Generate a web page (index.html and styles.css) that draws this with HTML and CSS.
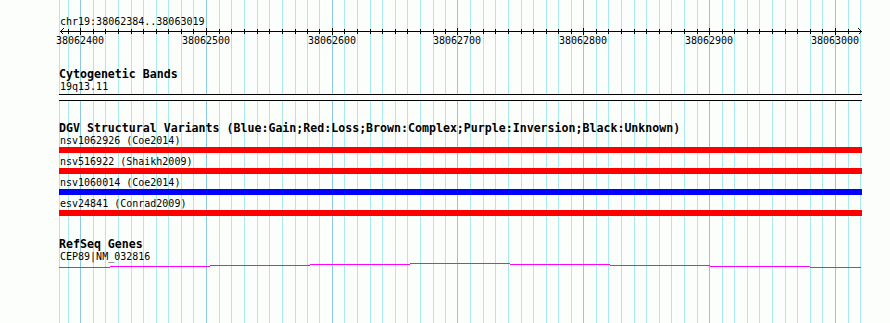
FILE: index.html
```html
<!DOCTYPE html>
<html lang="en">
<head>
<meta charset="utf-8">
<title>chr19:38062384..38063019</title>
<link rel="stylesheet" href="styles.css">
</head>
<body>
<div class="panel">
  <!-- grid: one line every 10 bp, darker every 100 bp -->
  <svg class="grid" width="890" height="323" viewBox="0 0 890 323">
    <path class="minor" d="M59.5 0V323M68.5 0V323M93.5 0V323M105.5 0V323M118.5 0V323M131.5 0V323M143.5 0V323M156.5 0V323M168.5 0V323M181.5 0V323M193.5 0V323M219.5 0V323M231.5 0V323M244.5 0V323M257.5 0V323M269.5 0V323M282.5 0V323M295.5 0V323M307.5 0V323M319.5 0V323M344.5 0V323M357.5 0V323M370.5 0V323M382.5 0V323M395.5 0V323M407.5 0V323M420.5 0V323M433.5 0V323M445.5 0V323M470.5 0V323M483.5 0V323M495.5 0V323M508.5 0V323M521.5 0V323M533.5 0V323M546.5 0V323M558.5 0V323M571.5 0V323M596.5 0V323M608.5 0V323M621.5 0V323M634.5 0V323M646.5 0V323M659.5 0V323M671.5 0V323M684.5 0V323M697.5 0V323M722.5 0V323M734.5 0V323M747.5 0V323M759.5 0V323M772.5 0V323M785.5 0V323M797.5 0V323M810.5 0V323M822.5 0V323M848.5 0V323M860.5 0V323"/>
    <path class="major" d="M80.5 0V323M206.5 0V323M332.5 0V323M457.5 0V323M583.5 0V323M709.5 0V323M835.5 0V323"/>
  </svg>

  <section class="track ruler">
    <p class="label">chr19:38062384..38063019</p>
    <svg class="scale" width="890" height="19" viewBox="0 0 890 19">
      <path d="M60 4.5H862"/>
      <path d="M68.5 2V7M93.5 2V7M105.5 2V7M118.5 2V7M131.5 2V7M143.5 2V7M156.5 2V7M168.5 2V7M181.5 2V7M193.5 2V7M219.5 2V7M231.5 2V7M244.5 2V7M257.5 2V7M269.5 2V7M282.5 2V7M295.5 2V7M307.5 2V7M319.5 2V7M344.5 2V7M357.5 2V7M370.5 2V7M382.5 2V7M395.5 2V7M407.5 2V7M420.5 2V7M433.5 2V7M445.5 2V7M470.5 2V7M483.5 2V7M495.5 2V7M508.5 2V7M521.5 2V7M533.5 2V7M546.5 2V7M558.5 2V7M571.5 2V7M596.5 2V7M608.5 2V7M621.5 2V7M634.5 2V7M646.5 2V7M659.5 2V7M671.5 2V7M684.5 2V7M697.5 2V7M722.5 2V7M734.5 2V7M747.5 2V7M759.5 2V7M772.5 2V7M785.5 2V7M797.5 2V7M810.5 2V7M822.5 2V7M848.5 2V7"/>
      <path d="M80.5 1V8M206.5 1V8M332.5 1V8M457.5 1V8M583.5 1V8M709.5 1V8M835.5 1V8"/>
      <path d="M63.5 1.5L60.5 4.5L63.5 7.5M858.5 1.5L861.5 4.5L858.5 7.5"/>
      <text x="80" y="17">38062400</text>
      <text x="206" y="17">38062500</text>
      <text x="332" y="17">38062600</text>
      <text x="457" y="17">38062700</text>
      <text x="583" y="17">38062800</text>
      <text x="709" y="17">38062900</text>
      <text x="835" y="17">38063000</text>
    </svg>
  </section>

  <section class="track bands">
    <h2 class="title">Cytogenetic Bands</h2>
    <p class="label">19q13.11</p>
    <svg class="band" width="890" height="10" viewBox="0 0 890 10">
      <rect x="59" y="3" width="803" height="5"/>
      <path d="M59 2.5H862M59 8.5H862"/>
    </svg>
  </section>

  <section class="track variants">
    <h2 class="title">DGV Structural Variants (Blue:Gain;Red:Loss;Brown:Complex;Purple:Inversion;Black:Unknown)</h2>
    <div class="variant">
      <p class="label">nsv1062926 (Coe2014)</p>
      <div class="bar loss"></div>
    </div>
    <div class="variant">
      <p class="label">nsv516922 (Shaikh2009)</p>
      <div class="bar loss"></div>
    </div>
    <div class="variant">
      <p class="label">nsv1060014 (Coe2014)</p>
      <div class="bar gain"></div>
    </div>
    <div class="variant">
      <p class="label">esv24841 (Conrad2009)</p>
      <div class="bar loss"></div>
    </div>
  </section>

  <section class="track genes">
    <h2 class="title">RefSeq Genes</h2>
    <p class="label">CEP89|NM_032816</p>
    <svg class="gene-model" width="890" height="8" viewBox="0 0 890 8">
      <path d="M59 5.5H110M110 4.5H210M210 3.5H310M310 2.5H410M410 1.5H510M510 2.5H610M610 3.5H710M710 4.5H810M810 5.5H861"/>
    </svg>
  </section>
</div>
</body>
</html>
```

FILE: styles.css
```css
*{margin:0;padding:0}
body{background-color:#fcfefc;font-family:"DejaVu Sans Mono","Liberation Mono",monospace;color:#000}
.panel{overflow:hidden;position:relative;width:890px;height:323px}
.grid{position:absolute;top:0;left:0}
.grid path{fill:none;stroke-width:1;shape-rendering:crispEdges}
.grid .minor{stroke:#a9ebec}
.grid .major{stroke:#8ccae4}
.track{position:relative}
.label{padding-left:60px;font-size:10px;line-height:11px;white-space:nowrap}
.title{padding-left:59px;font-size:11.6px;line-height:14px;font-weight:bold;white-space:nowrap}
.ruler{padding-top:16px}
.scale,.band,.gene-model{display:block;overflow:visible}
.scale path{fill:none;stroke:#000;stroke-width:1;shape-rendering:crispEdges}
.scale text{font-size:10px;text-anchor:middle}
.bands{margin-top:21px}
.band rect{fill:#fff;shape-rendering:crispEdges}
.band path{fill:none;stroke:#000;stroke-width:1;shape-rendering:crispEdges}
.variants{margin-top:19px}
.variant+.variant{margin-top:3px}
.bar{width:803px;height:6px;margin:1px 0 0 59px}
.bar.loss{background-color:#f00}
.bar.gain{background-color:#00f}
.genes{margin-top:21px}
.gene-model path{fill:none;stroke:#f0f;stroke-width:1;shape-rendering:crispEdges}
```
